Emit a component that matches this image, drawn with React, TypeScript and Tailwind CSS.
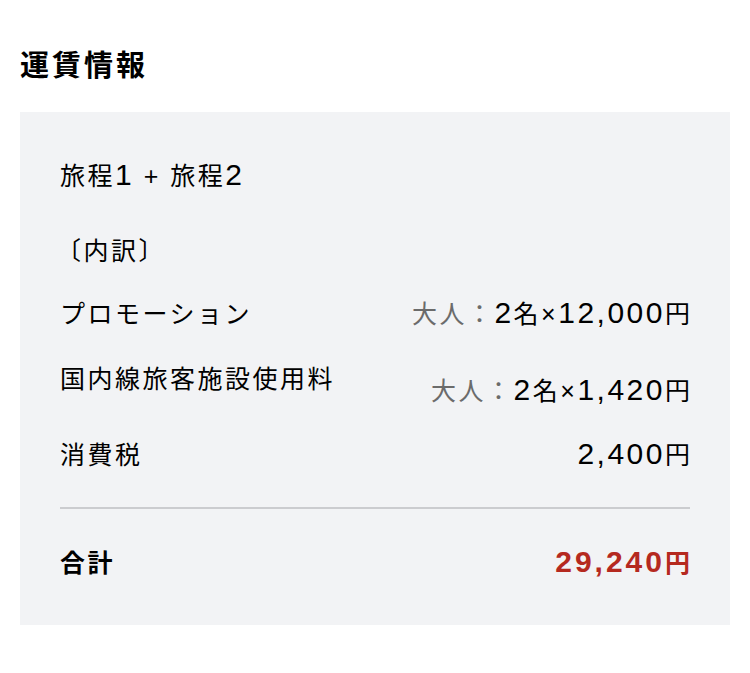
import React from 'react';

const Num: React.FC<{ children: React.ReactNode }> = ({ children }) => (
  <span className="text-[30px] leading-[28px] tracking-[2.5px]">{children}</span>
);

const App: React.FC = () => {
  return (
    <div className="w-[750px] h-[673px] bg-white font-['Liberation_Sans','Noto_Sans_CJK_JP',sans-serif] text-black tracking-[2.5px]">
      <h1 className="px-5 pt-[46px] text-[29px] leading-[40px] font-bold tracking-[3px]">運賃情報</h1>
      <div className="mx-5 mt-[26px] bg-[#f2f3f5] px-10 pt-[44px] pb-[42px] text-[25px] leading-[40px]">
        <p>
          旅程<Num>1</Num> + 旅程<Num>2</Num>
        </p>
        <p className="mt-[35px] -ml-[4px]">〔内訳〕</p>
        <div className="mt-[23px] flex justify-between">
          <span>プロモーション</span>
          <span className="-mr-[2.5px]">
            <span className="text-[#6b6b6b]">大人：</span>
            <Num>2</Num>名×<Num>12,000</Num>円
          </span>
        </div>
        <div className="mt-[25px] flex justify-between items-start">
          <span>国内線旅客施設使用料</span>
          <span className="pt-3 -mr-[2.5px]">
            <span className="text-[#6b6b6b]">大人：</span>
            <Num>2</Num>名×<Num>1,420</Num>円
          </span>
        </div>
        <div className="mt-6 flex justify-between">
          <span>消費税</span>
          <span className="-mr-[2.5px]">
            <Num>2,400</Num>円
          </span>
        </div>
        <div className="mt-8 border-t-2 border-[#cbcccf]" />
        <div className="mt-[34px] flex justify-between font-bold">
          <span>合計</span>
          <span className="text-[#b5291f] -mr-[2.5px]">
            <span className="text-[30px] leading-[28px] tracking-[3px]">29,240</span>円
          </span>
        </div>
      </div>
    </div>
  );
};

export default App;
